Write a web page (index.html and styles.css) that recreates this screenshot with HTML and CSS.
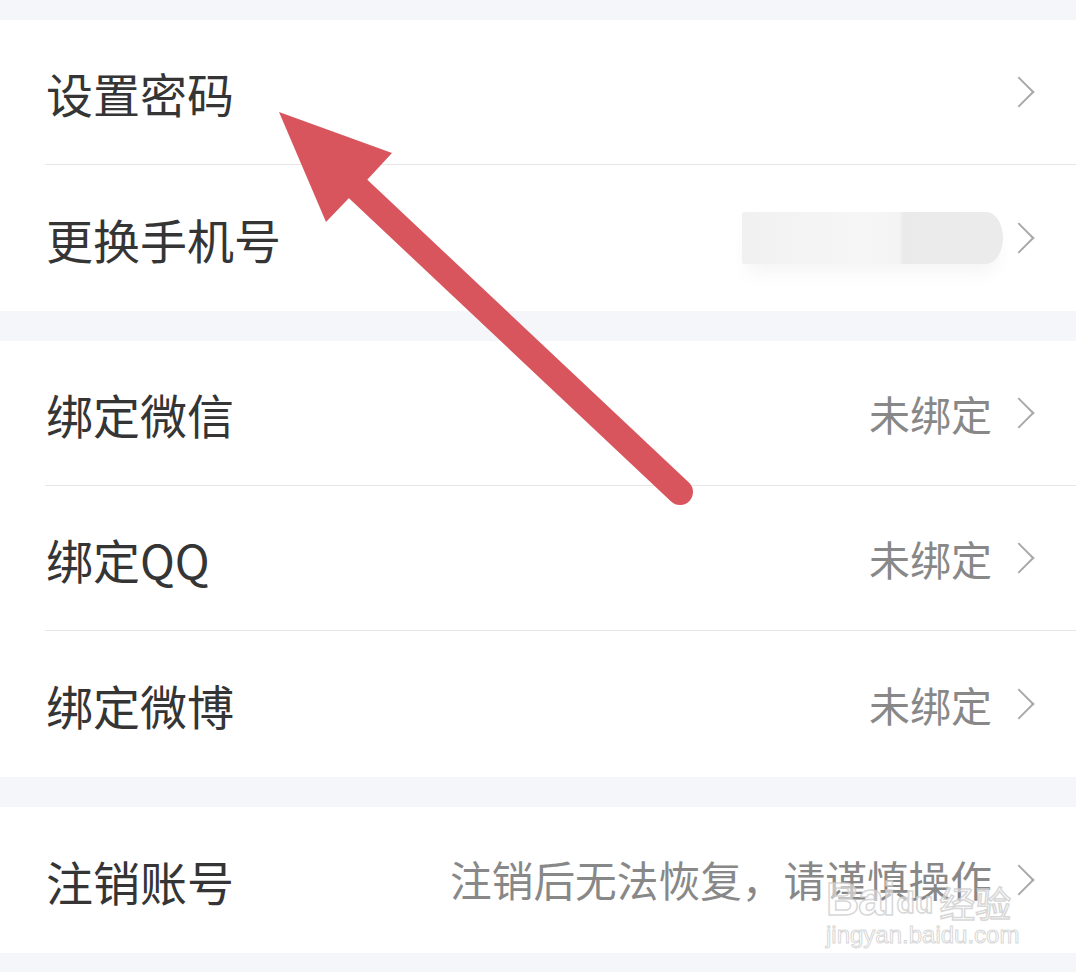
FILE: index.html
```html
<!DOCTYPE html>
<html lang="zh-CN">
<head>
<meta charset="utf-8">
<title>账号与安全</title>
<link rel="stylesheet" href="styles.css">
</head>
<body>
<div class="page">
  <section class="group">
    <div class="row"><span class="label">设置密码</span><span class="right"><span class="chev"></span></span></div>
    <div class="row"><span class="label">更换手机号</span><span class="right"><span class="masked"></span><span class="chev"></span></span></div>
  </section>
  <section class="group">
    <div class="row"><span class="label">绑定微信</span><span class="right"><span class="value">未绑定</span><span class="chev"></span></span></div>
    <div class="row"><span class="label">绑定QQ</span><span class="right"><span class="value">未绑定</span><span class="chev"></span></span></div>
    <div class="row"><span class="label">绑定微博</span><span class="right"><span class="value">未绑定</span><span class="chev"></span></span></div>
  </section>
  <section class="group">
    <div class="row"><span class="label">注销账号</span><span class="right"><span class="value value-long">注销后无法恢复，请谨慎操作</span><span class="chev"></span></span></div>
  </section>

  <svg class="arrow" width="1076" height="972" viewBox="0 0 1076 972" aria-hidden="true">
    <line x1="355" y1="186" x2="680" y2="492" stroke="#d9555d" stroke-width="26" stroke-linecap="round"/>
    <polygon points="279,112 392,153 367,180 349,198 326,222" fill="#d9555d"/>
  </svg>

  <div class="watermark">
    <div class="wm-top"><span class="wm-bai">Bai</span><span class="wm-du">du</span><span class="wm-jy">经验</span></div>
    <div class="wm-url">jingyan.baidu.com</div>
  </div>
</div>
</body>
</html>
```
FILE: styles.css
```css
* { box-sizing: border-box; }
html, body {
  margin: 0;
  padding: 0;
  background: #f5f6fa;
}
body {
  font-family: "Noto Sans CJK SC", "Noto Sans", sans-serif;
}
.page {
  position: relative;
  width: 1076px;
  height: 972px;
  padding-top: 20px;
  display: flex;
  flex-direction: column;
  gap: 30px;
  overflow: hidden;
}
.group {
  background: #fff;
  display: flex;
  flex-direction: column;
}
.row {
  height: 145px;
  margin-left: 45px;
  padding-left: 1px;
  padding-right: 41px;
  display: flex;
  align-items: center;
  justify-content: space-between;
  border-bottom: 1.5px solid #e6e6e6;
}
.row:last-child {
  border-bottom: none;
  height: 146px;
}
.label {
  font-size: 47px;
  color: #353535;
  line-height: 1;
}
.right {
  display: flex;
  align-items: center;
}
.value {
  font-size: 41px;
  color: #888;
  line-height: 1;
  margin-right: 25px;
  white-space: nowrap;
}
.value-long {
  font-size: 41.7px;
}
.chev {
  width: 18px;
  height: 30px;
  display: block;
  position: relative;
}
.chev::before {
  content: "";
  position: absolute;
  left: -9px;
  top: 4px;
  width: 20px;
  height: 20px;
  border-top: 2.5px solid #a9a9a9;
  border-right: 2.5px solid #a9a9a9;
  transform: rotate(45deg);
}
.masked {
  display: block;
  width: 261px;
  height: 52px;
  margin-right: 14px;
  border-radius: 4px 26px 26px 4px / 4px 40px 40px 4px;
  background: linear-gradient(90deg, #f1f1f1 0%, #f3f3f3 20%, #f6f6f6 45%, #f4f4f4 60%, #eaeaea 62%, #ebebeb 100%);
  box-shadow: 0 14px 18px -6px rgba(240, 240, 240, 0.7);
}
.arrow {
  position: absolute;
  left: 0;
  top: 0;
  pointer-events: none;
}
.watermark {
  position: absolute;
  left: 826px;
  top: 874px;
  width: 200px;
  color: rgba(255, 255, 255, 0.5);
  font-family: "Liberation Sans", sans-serif;
  pointer-events: none;
  white-space: nowrap;
}
.wm-top {
  display: flex;
  align-items: flex-end;
  height: 48px;
  line-height: 1;
  -webkit-text-stroke: 1.5px rgba(205, 205, 205, 0.8);
}
.wm-bai {
  font-size: 46px;
  font-weight: bold;
  letter-spacing: -1px;
}
.wm-du {
  font-size: 30px;
  font-weight: bold;
  margin: 0 6px 4px 2px;
}
.wm-jy {
  font-family: "Noto Sans CJK SC", sans-serif;
  font-size: 36px;
  margin-bottom: 2px;
}
.wm-url {
  font-size: 24px;
  line-height: 26px;
  -webkit-text-stroke: 1px rgba(205, 205, 205, 0.8);
}
```
